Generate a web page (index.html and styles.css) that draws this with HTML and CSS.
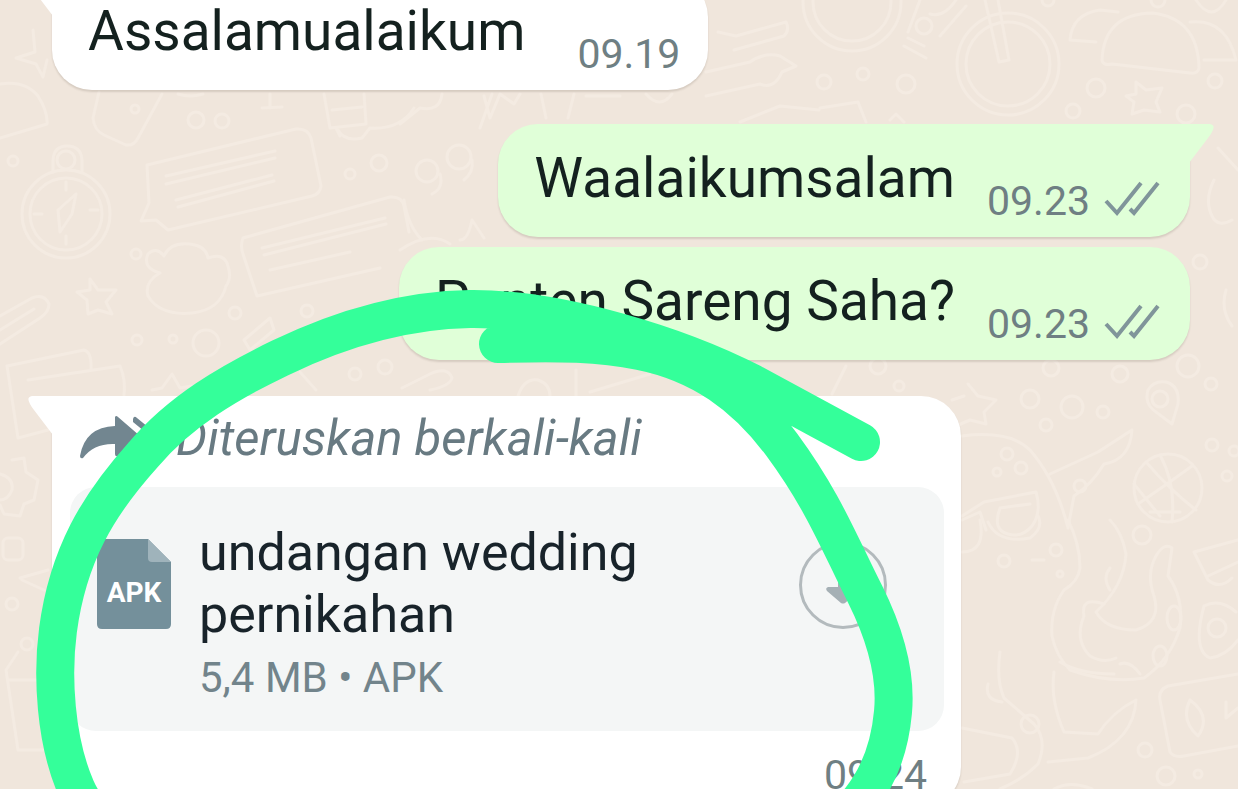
FILE: index.html
```html
<!DOCTYPE html>
<html lang="id">
<head>
<meta charset="utf-8">
<meta name="viewport" content="width=device-width, initial-scale=1">
<title>Chat</title>
<link rel="stylesheet" href="styles.css">
</head>
<body>
<svg width="0" height="0" class="defs" aria-hidden="true">
  <symbol id="ticks" viewBox="0 0 56 36">
    <path d="M2 20 L13 32 L37 2 M26 28 L30 32 L54 2" fill="none" stroke="currentColor" stroke-width="4"/>
  </symbol>
  <symbol id="tail" viewBox="0 0 25 40">
    <path d="M25 0 H4 Q-2 1 2 8 Q3 10 6 14 L25 39 Z" fill="currentColor"/>
  </symbol>
</svg>
<main class="screen">
  <svg class="doodles" width="1238" height="789" viewBox="0 0 1238 789" aria-hidden="true">
    <!-- left side -->
    <path d="M0 84 Q25 80 38 96 Q48 112 47 124 L0 138"/>
    <path d="M33 30 L35 52 L16 58 L36 64 L43 77 L47 60"/>
    <circle cx="13" cy="161" r="5"/>
    <circle cx="66" cy="214" r="44"/><circle cx="66" cy="214" r="36"/>
    <path d="M53 172 V160 Q54 146 67 146 Q81 146 82 160 V172"/><circle cx="66" cy="160" r="9"/>
    <path d="M76 194 L58 210 L60 232 L72 214 Z M66 182 V190 M66 236 V244 M34 214 H42 M90 210 H98"/>
    <path d="M99 92 L93 118 Q94 130 104 135 L126 145 Q134 146 138 138 L162 94"/>
    <circle cx="135" cy="109" r="4"/><path d="M178 94 Q190 98 203 94"/>
    <circle cx="196" cy="120" r="8"/><circle cx="222" cy="121" r="7"/>
    <path d="M270 94 V108 M262 108 L282 107"/>
    <path d="M147 165 L296 129 Q308 128 311 138 L321 186 Q320 194 312 196 L168 230 L156 220 L141 221 L149 203 Z"/>
    <path d="M166 176 L275 151 M166 184 L275 158 M176 200 L272 175 M178 207 L274 181"/>
    <path d="M324 94 L330 128 L366 124 L364 94 M332 110 L362 107 M338 130 Q345 142 362 138 L370 128 Q400 130 414 108 M336 128 L340 136"/>
    <circle cx="350" cy="174" r="5"/><circle cx="379" cy="163" r="8"/><circle cx="136" cy="254" r="5"/>
    <path d="M243 238 L390 197 Q402 196 404 206 L409 232 M243 238 Q240 246 243 254 L257 296 L380 268 M262 248 L385 218 M264 255 L386 224 M270 270 L350 252"/>
    <path d="M160 273 Q142 268 148 254 Q156 246 164 256 Q170 242 190 244 Q206 246 208 258 Q224 252 228 266 Q232 278 226 286 Q220 310 192 313 Q160 316 148 296 Q144 282 160 273"/>
    <path d="M90 279 L98 290 L116 290 L106 302 L112 314 L98 310 L88 314 L87 300 L77 292 L90 290 Z"/>
    <path d="M0 316 L32 298 Q44 293 49 304 Q49 312 40 318 L0 344 M0 330 L34 309"/>
    <circle cx="235" cy="313" r="6"/><circle cx="137" cy="340" r="5"/><circle cx="173" cy="339" r="4"/><circle cx="206" cy="343" r="13"/>
    <path d="M7 366 L84 350 Q92 352 91 370 M7 366 L18 438 L48 430 M28 380 L120 366 Q126 380 124 395"/>
    <path d="M244 340 L270 318 L274 330 L250 350 Z M152 390 L162 388 L172 374 L180 388 L192 386"/>
    <path d="M12 460 L24 458 L26 472 L38 480 L34 500 L24 504 L20 516 L4 514 L0 505 M0 474 Q14 478 12 490 Q8 500 0 500"/>
    <rect x="3" y="538" width="20" height="22" rx="5"/><path d="M20 578 L48 570 M22 580 L44 590"/><circle cx="12" cy="604" r="6"/>
    <circle cx="27" cy="644" r="6"/><path d="M18 652 L6 670 L18 750 L44 750 M8 680 L38 680"/>
    <!-- between bubbles -->
    <path d="M400 124 L420 108 Q440 112 442 94 M480 128 L492 94 M484 96 L490 118 L500 94 L514 104 L520 94"/>
    <path d="M541 94 L546 118 M568 118 L574 94 M586 96 L620 96 M646 94 Q660 110 672 94"/>
    <circle cx="427" cy="171" r="11"/><circle cx="459" cy="157" r="12"/><path d="M440 174 Q444 188 432 194 M472 160 Q474 172 464 180"/>
    <path d="M404 200 Q408 226 422 240 M460 240 Q468 240 472 220 L484 238 M400 250 Q430 230 450 244"/>
    <circle cx="307" cy="311" r="6"/><path d="M300 372 L316 390 M320 330 L338 318"/><circle cx="355" cy="374" r="6"/><circle cx="385" cy="367" r="7"/>
    <path d="M402 388 L430 374 Q448 366 452 378 Q450 386 430 390 M518 396 Q524 378 538 380 Q550 384 550 396 M576 370 V396 M590 392 L650 374"/>
    <!-- top right -->
    <path d="M718 32 L736 36 L786 22 Q790 30 784 36 L734 50 M706 72 L750 62 Q764 52 780 56 L796 66 L782 72 Q774 90 760 84 L706 96"/>
    <path d="M740 122 L780 106 L819 110"/>
    <circle cx="852" cy="2" r="49"/><circle cx="852" cy="2" r="39"/>
    <path d="M920 0 L908 32 M930 14 Q944 18 956 0 M908 38 L924 46 M904 46 L926 58 M966 6 L940 36"/>
    <circle cx="924" cy="26" r="8"/><circle cx="824" cy="82" r="7"/><circle cx="863" cy="74" r="6"/><circle cx="906" cy="84" r="9"/>
    <circle cx="1008" cy="64" r="51"/><circle cx="1008" cy="64" r="42"/>
    <path d="M985 0 L999 62 L1009 60 L998 0"/>
    <path d="M1102 60 Q1104 14 1152 13 Q1198 18 1199 68 Q1198 74 1190 73 L1112 64 Q1103 66 1102 60 Z M1070 40 Q1072 14 1100 10 L1118 12 M1070 40 L1096 42 M1190 22 Q1226 18 1236 60 L1204 60"/>
    <path d="M1196 0 Q1212 24 1226 0"/><circle cx="1048" cy="0" r="6"/><circle cx="1158" cy="0" r="7"/>
    <circle cx="1096" cy="88" r="9"/><circle cx="1215" cy="81" r="7"/><circle cx="1073" cy="111" r="7"/><circle cx="1186" cy="114" r="9"/>
    <path d="M1136 82 L1146 90 L1162 88 L1156 102 L1160 112 L1144 110 L1132 114 L1134 102 L1126 96 L1136 94 Z"/>
    <path d="M820 108 L858 102 L866 122 M890 120 L896 114 L904 122"/>
    <path d="M1214 180 Q1204 200 1212 216 Q1218 228 1232 220 M1218 148 L1238 170 M1226 290 Q1220 310 1232 326"/>
    <!-- lower right -->
    <circle cx="1200" cy="262" r="7"/><circle cx="1188" cy="366" r="11"/><circle cx="1211" cy="384" r="6"/><circle cx="1120" cy="374" r="8"/><circle cx="1051" cy="368" r="8"/>
    <circle cx="1030" cy="399" r="9"/><circle cx="1072" cy="407" r="11"/><circle cx="1103" cy="412" r="6"/><circle cx="1046" cy="425" r="6"/>
    <circle cx="878" cy="366" r="8"/><circle cx="899" cy="386" r="5"/><path d="M832 394 L846 366"/>
    <path d="M968 384 L978 396 L996 400 L984 412 L986 424 L970 420 L956 426 M952 400 L964 396 Z"/>
    <path d="M1172 424 L1156 412 Q1144 404 1148 390 Q1154 380 1166 382 Q1180 386 1178 404 Z"/><circle cx="1160" cy="399" r="8"/>
    <path d="M962 436 Q1010 430 1030 450 Q1056 480 1068 528 M1050 474 L1098 452 L1132 430 Q1130 460 1104 464 Q1092 484 1074 496 L1068 528"/>
    <circle cx="1007" cy="454" r="6"/><circle cx="1021" cy="468" r="6"/><circle cx="997" cy="472" r="4"/><circle cx="1080" cy="486" r="6"/>
    <circle cx="1168" cy="488" r="34"/><path d="M1146 462 Q1170 490 1196 510 M1138 504 Q1170 482 1192 466 M1160 455 Q1176 484 1172 522 M1134 484 L1160 516"/>
    <circle cx="1212" cy="445" r="6"/><circle cx="1227" cy="476" r="5"/><circle cx="1234" cy="451" r="5"/>
    <path d="M962 516 L984 502 L1036 492 Q1042 512 1032 526 Q1022 538 1008 534 Q992 530 1000 508 L1030 504 M962 520 L980 512 L986 530"/>
    <path d="M962 552 Q986 552 980 520 M988 522 Q998 544 1030 538 Q1044 528 1038 516"/>
    <circle cx="1004" cy="561" r="6"/><path d="M1032 560 L1044 560"/><circle cx="1056" cy="550" r="6"/><circle cx="1060" cy="574" r="3"/><circle cx="1142" cy="535" r="9"/>
    <path d="M1068 520 Q1080 544 1080 568 Q1078 582 1064 590 Q1050 610 1052 636 Q1056 656 1070 670 Q1110 684 1144 678 Q1170 660 1180 628 Q1184 598 1168 576 L1172 548 Q1164 542 1156 556 Q1146 574 1154 596 Q1162 622 1136 630 Q1106 630 1096 612 Q1124 586 1126 554 Q1122 532 1110 520"/>
    <path d="M1104 604 Q1080 596 1084 616 Q1074 640 1090 656 Q1104 664 1116 658 M1060 662 Q1080 674 1114 674 M1110 568 Q1102 578 1110 590 M1120 664 Q1130 660 1140 674"/>
    <ellipse cx="1174" cy="618" rx="7" ry="12"/><ellipse cx="1160" cy="656" rx="7" ry="10"/>
    <path d="M1054 672 Q1050 700 1064 732 L1098 734 Q1112 712 1136 700 Q1134 740 1088 758 L1048 762"/>
    <path d="M1000 652 Q996 680 1004 698 L1034 724 Q1048 740 1038 764 Q1022 780 1000 789 M988 684 Q984 700 1002 702 M962 728 L1012 738 Q1024 752 1010 774 L964 782"/>
    <circle cx="1030" cy="724" r="9"/><circle cx="1145" cy="750" r="7"/><circle cx="1166" cy="776" r="9"/><circle cx="1198" cy="774" r="4"/>
    <path d="M1194 552 L1238 540 M1194 552 L1208 580 Q1220 590 1232 578 M1238 562 L1208 576"/>
    <path d="M1204 606 Q1220 598 1236 612 M1204 606 Q1192 650 1210 658 Q1226 656 1238 640"/><circle cx="1217" cy="628" r="9"/>
    <path d="M1238 674 L1168 686 Q1158 690 1160 700 L1170 752 Q1174 758 1184 756 L1238 746 M1190 700 Q1180 720 1198 736 Q1212 716 1190 700 M1226 702 V718 L1238 708"/>
    <path d="M1054 789 Q1070 780 1092 789 M1150 512 H1180"/>
  </svg>

  <div class="thread">
    <article class="bubble in line">
      <svg class="tail"><use href="#tail"/></svg>
      <p class="text">Assalamualaikum</p>
      <time class="time">09.19</time>
    </article>
    <article class="bubble out line turn">
      <svg class="tail"><use href="#tail"/></svg>
      <p class="text">Waalaikumsalam</p>
      <time class="time">09.23</time>
      <svg class="ticks" role="img" aria-label="Terkirim"><use href="#ticks"/></svg>
    </article>
    <article class="bubble out line follow">
      <p class="text">Punten Sareng Saha?</p>
      <time class="time">09.23</time>
      <svg class="ticks" role="img" aria-label="Terkirim"><use href="#ticks"/></svg>
    </article>
    <article class="bubble in media turn">
      <svg class="tail"><use href="#tail"/></svg>
      <p class="forwarded">
        <svg class="forward-icon" width="88" height="48" viewBox="0 0 88 48" aria-hidden="true">
          <path d="M35 2 Q36 0 38 2 L60 21 L38 41 Q35 42 35 39 V29 Q14 28 3 43 Q0 44 0 41 Q5 12 35 11 Z M53 4 Q54 0 57 3 L79 21 L57 40 Q54 42 53 38 L70 21 L53 7 Z"/>
        </svg>
        Diteruskan berkali-kali
      </p>
      <div class="file">
        <div class="file-icon">
          <svg width="74" height="90" viewBox="0 0 74 90" aria-hidden="true">
            <path d="M5 0 H51 L74 23 V85 Q74 90 69 90 H5 Q0 90 0 85 V5 Q0 0 5 0 Z" fill="#74909b"/>
            <path d="M51 0 L74 23 H55 Q51 23 51 19 Z" fill="#9fb3bb"/>
          </svg>
          <span class="file-type">APK</span>
        </div>
        <div class="file-info">
          <p class="file-name">undangan wedding pernikahan</p>
          <p class="file-meta">5,4 MB • APK</p>
        </div>
        <button class="download" type="button" aria-label="Unduh">
          <svg width="36" height="42" viewBox="0 0 36 42" aria-hidden="true">
            <path d="M13 2 H23 V23 H33 Q36 24 34 27 L20 39 Q18 40 16 39 L2 27 Q0 24 3 23 H13 Z" fill="#a5b0b5"/>
          </svg>
        </button>
      </div>
      <time class="time">09.24</time>
    </article>
  </div>

  <svg class="marker" width="1238" height="789" viewBox="0 0 1238 789" aria-hidden="true">
    <path d="M498 344 C560 342 600 343 640 351 C700 363 745 395 782 445 C824 502 840 545 865 594 C888 640 896 680 893 712 C890 745 880 775 860 800 L820 850 L130 850 Q90 820 76 788 C55 740 52 675 58 630 C68 555 98 505 143 455 C180 411 230 382 280 358 C340 329 405 310 470 309 C560 308 680 346 752 383 L861 442"/>
  </svg>
</main>
</body>
</html>
```
FILE: styles.css
```css
* { box-sizing: border-box; }

body {
  margin: 0;
  font-family: Roboto, "Liberation Sans", sans-serif;
  color: #111b21;
}

p { margin: 0; }

.defs { position: absolute; }

.screen {
  position: relative;
  height: 100vh;
  overflow: hidden;
  background: #f0e6dc;
}

.doodles,
.marker {
  position: absolute;
  top: 0;
  left: 0;
  fill: none;
  stroke-linecap: round;
  stroke-linejoin: round;
}

.doodles {
  stroke: #f4ebe2;
  stroke-width: 3;
}

.marker {
  stroke: #34ff9a;
  stroke-width: 38;
  pointer-events: none;
}

/* The thread is scrolled a little past the first message. */
.thread {
  position: relative;
  display: flex;
  flex-direction: column;
  margin-top: -23px;
  padding: 0 48px 0 52px;
}

.bubble {
  position: relative;
  border-radius: 40px;
  box-shadow: 0 2px 2px rgba(60, 40, 30, 0.14);
}

.in {
  align-self: flex-start;
  border-top-left-radius: 0;
  background: #fff;
  color: #fff;
}

.out {
  align-self: flex-end;
  background: #e0ffd8;
  color: #e0ffd8;
}

.turn { margin-top: 34px; }
.in.turn { margin-top: 36px; }
.out.turn { border-top-right-radius: 0; }
.follow { margin-top: 10px; }

.tail {
  position: absolute;
  top: 0;
  width: 25px;
  height: 40px;
}

.in .tail { left: -24px; }

.out .tail {
  right: -24px;
  transform: scaleX(-1);
}

.line {
  display: flex;
  align-items: flex-end;
  padding: 21px 28px 12px 36px;
}

.text {
  margin: 0 32px 14px 0;
  font-size: 55px;
  line-height: 66px;
  color: #14211f;
}

.in .text { margin-right: 52px; }

.time {
  font-size: 41px;
  line-height: 48px;
  color: #6f7f83;
}

.ticks {
  width: 56px;
  height: 36px;
  margin: 0 2px 8px 14px;
  color: #80959a;
}

.media {
  display: flex;
  flex-direction: column;
  width: 909px;
  max-width: 100%;
  padding: 16px 17px 8px 18px;
}

.forwarded {
  display: flex;
  align-items: center;
  gap: 8px;
  padding-left: 10px;
  font-size: 49px;
  line-height: 54px;
  font-style: italic;
  color: #687a82;
}

.forward-icon { fill: #728690; }

.file {
  display: flex;
  margin-top: 21px;
  padding: 35px 57px 29px 27px;
  border-radius: 26px;
  background: #f4f6f6;
}

.file-icon {
  position: relative;
  height: 90px;
  margin-top: 17px;
}

.file-type {
  position: absolute;
  top: 38px;
  left: 0;
  width: 74px;
  font-size: 28px;
  line-height: 32px;
  font-weight: 700;
  text-align: center;
  color: #fff;
}

.file-info {
  flex: 1;
  padding: 0 140px 0 28px;
}

.file-name {
  font-size: 52px;
  line-height: 62px;
  color: #18232a;
}

.file-meta {
  margin-top: 8px;
  font-size: 42px;
  line-height: 48px;
  color: #72848b;
}

.download {
  display: flex;
  align-items: center;
  justify-content: center;
  width: 88px;
  height: 88px;
  margin-top: 19px;
  padding: 0;
  border: 3px solid #b3babd;
  border-radius: 50%;
  background: none;
}

.media .time {
  align-self: flex-end;
  margin: 20px 17px 0 0;
}
```
